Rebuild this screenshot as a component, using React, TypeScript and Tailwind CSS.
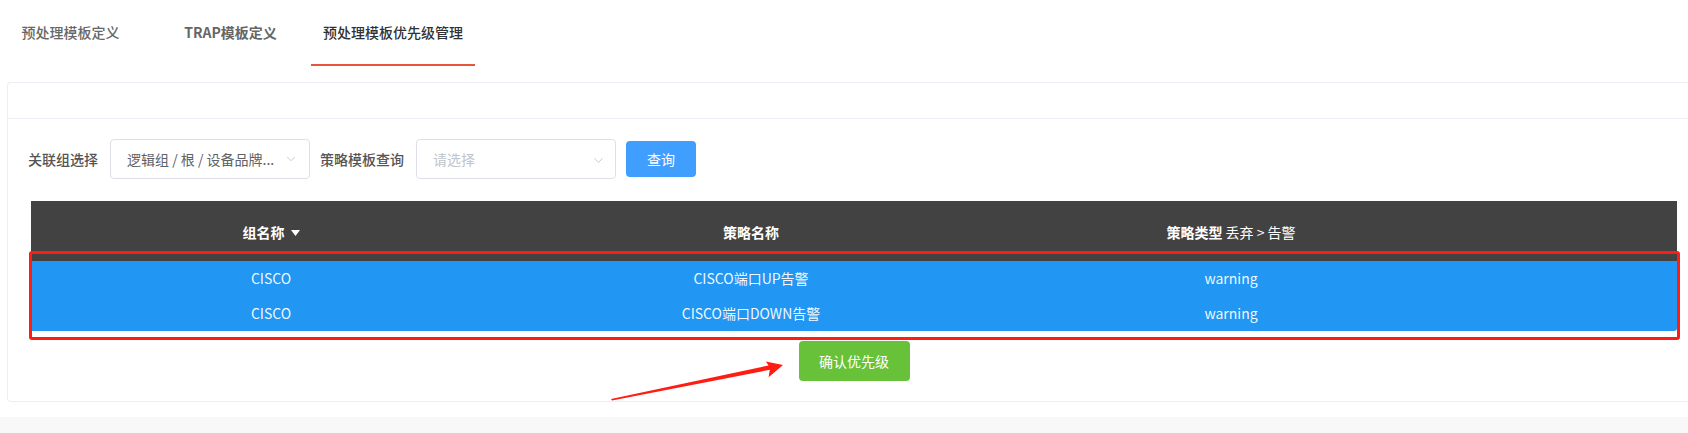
import { ChevronDown } from "lucide-react";

const font = "font-['Microsoft_YaHei','Noto_Sans_CJK_SC',sans-serif]";

const rows = [
  { group: "CISCO", name: "CISCO端口UP告警", type: "warning" },
  { group: "CISCO", name: "CISCO端口DOWN告警", type: "warning" },
];

export default function App() {
  return (
    <div className={`relative w-[1688px] h-[433px] overflow-hidden bg-white ${font}`}>
      {/* ── Tabs ── */}
      <div className="flex h-[66px] text-[14px]">
        <div className="ml-[10px] w-[121px] flex items-center justify-center border-b-2 border-transparent text-[#666] font-medium">
          预处理模板定义
        </div>
        <div className="ml-[41px] w-[117px] flex items-center justify-center border-b-2 border-transparent text-[#666] font-semibold">
          TRAP模板定义
        </div>
        <div className="ml-[22px] w-[164px] flex items-center justify-center border-b-2 border-[#e8553f] text-[#303133] font-medium">
          预处理模板优先级管理
        </div>
      </div>

      {/* ── Card ── */}
      <div className="mt-[16px] ml-[7px] border border-r-0 border-[#ebeef5] rounded-l-[4px]">
        <div className="h-[36px] border-b border-[#ebeef5]" />

        <div className="pt-[20px] pb-[20px]">
          {/* filters */}
          <div className="flex items-center h-[40px] pl-[20px] text-[14px]">
            <span className="w-[70px] text-[#555] font-medium whitespace-nowrap">关联组选择</span>
            <div className="ml-[12px] w-[200px] h-[40px] flex items-center justify-between pl-[16px] pr-[11px] border border-[#dcdfe6] rounded-[4px]">
              <span className="text-[#606266] whitespace-nowrap">逻辑组 / 根 / 设备品牌...</span>
              <ChevronDown className="w-[14px] h-[14px] text-[#c0c4cc]" strokeWidth={1.5} />
            </div>
            <span className="ml-[10px] w-[84px] text-[#555] font-medium whitespace-nowrap">策略模板查询</span>
            <div className="ml-[12px] w-[200px] h-[40px] flex items-center justify-between pl-[16px] pr-[9px] border border-[#dcdfe6] rounded-[4px]">
              <span className="text-[#c0c4cc]">请选择</span>
              <ChevronDown className="w-[15px] h-[15px] mt-[3px] text-[#c0c4cc]" strokeWidth={1.5} />
            </div>
            <button className="ml-[10px] w-[70px] h-[36px] rounded-[4px] bg-[#409eff] text-white">
              查询
            </button>
          </div>

          {/* table */}
          <div className="mt-[22px] ml-[23px] w-[1646px] text-[14px]">
            <div className="flex h-[60px] bg-[#424242] text-white pt-[3px]">
              <div className="w-[480px] flex items-center justify-center gap-[6px] font-bold">
                组名称
                <svg width="9" height="6" viewBox="0 0 9 6">
                  <path d="M0 0h9L4.5 6z" fill="#fff" />
                </svg>
              </div>
              <div className="w-[480px] flex items-center justify-center font-bold">策略名称</div>
              <div className="w-[480px] flex items-center justify-center">
                <span className="font-bold">策略类型</span>&nbsp;丢弃 &gt; 告警
              </div>
              <div className="flex-1" />
            </div>
            <div className="bg-[#2196f3] rounded-br-[3px] text-white/95">
              {rows.map((r, i) => (
                <div key={i} className="flex h-[35px]">
                  <div className="w-[480px] flex items-center justify-center">{r.group}</div>
                  <div className="w-[480px] flex items-center justify-center">{r.name}</div>
                  <div className="w-[480px] flex items-center justify-center">{r.type}</div>
                  <div className="flex-1" />
                </div>
              ))}
            </div>
          </div>

          <div className="mt-[10px] ml-[23px] w-[1646px] flex justify-center">
            <button className="w-[111px] h-[40px] rounded-[4px] bg-[#67c23a] text-white text-[14px]">
              确认优先级
            </button>
          </div>
        </div>
      </div>

      <div className="mt-[15px] h-[20px] bg-[#f8f8f9]" />

      {/* annotation: red box */}
      <div className="absolute left-[29px] top-[251px] w-[1651px] h-[89px] border-[3px] border-[#ff1c12] rounded-[3px] pointer-events-none" />

      {/* annotation: arrow */}
      <svg className="absolute left-0 top-0 pointer-events-none" width="1688" height="433" viewBox="0 0 1688 433">
        <polygon
          points="611,399 768.6,365.4 765.8,361.4 783,365 768.6,377.2 769.8,369.8 612,400.6"
          fill="#ff1c12"
        />
      </svg>
    </div>
  );
}
